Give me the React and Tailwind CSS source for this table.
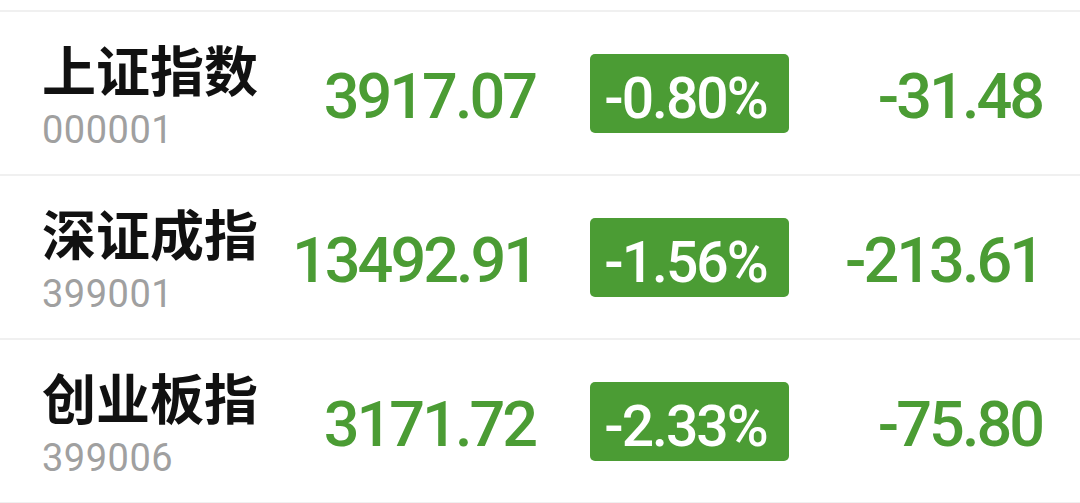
const rows = [
  { name: '上证指数', code: '000001', price: '3917.07', pct: '-0.80%', chg: '-31.48' },
  { name: '深证成指', code: '399001', price: '13492.91', pct: '-1.56%', chg: '-213.61' },
  { name: '创业板指', code: '399006', price: '3171.72', pct: '-2.33%', chg: '-75.80' },
];

function IndexRow({ item }) {
  return (
    <div className="flex h-[164px] items-center border-b-2 border-[#f0f0f0] pl-[42px] font-['Roboto','Liberation_Sans',sans-serif]">
      <div className="w-[250px] pt-[2px]">
        <div className="font-['Noto_Sans_CJK_SC',sans-serif] text-[54px] leading-[60px] font-bold text-[#111111]">
          {item.name}
        </div>
        <div className="mt-[11px] text-[38px] leading-[40px] tracking-[0.5px] text-[#a0a0a0]">
          {item.code}
        </div>
      </div>
      <div className="w-[243px] pt-[7px] text-right text-[63px] leading-[70px] font-medium tracking-[-3px] text-[#4b9c34]">
        {item.price}
      </div>
      <div className="ml-[55px] flex h-[79px] w-[199px] items-center justify-center rounded-[5px] bg-[#4b9c34] pt-[12px] pr-[8px] text-[57px] leading-[60px] font-medium tracking-[-2px] text-white">
        {item.pct}
      </div>
      <div className="flex-1 pt-[7px] pr-[38px] text-right text-[63px] leading-[70px] font-medium tracking-[-3px] text-[#4b9c34]">
        {item.chg}
      </div>
    </div>
  );
}

export default function App() {
  return (
    <div className="h-[503px] w-[1080px] overflow-hidden bg-white">
      <div className="h-[12px] border-b-2 border-[#f0f0f0]"></div>
      {rows.map((r) => (
        <IndexRow key={r.code} item={r} />
      ))}
    </div>
  );
}
